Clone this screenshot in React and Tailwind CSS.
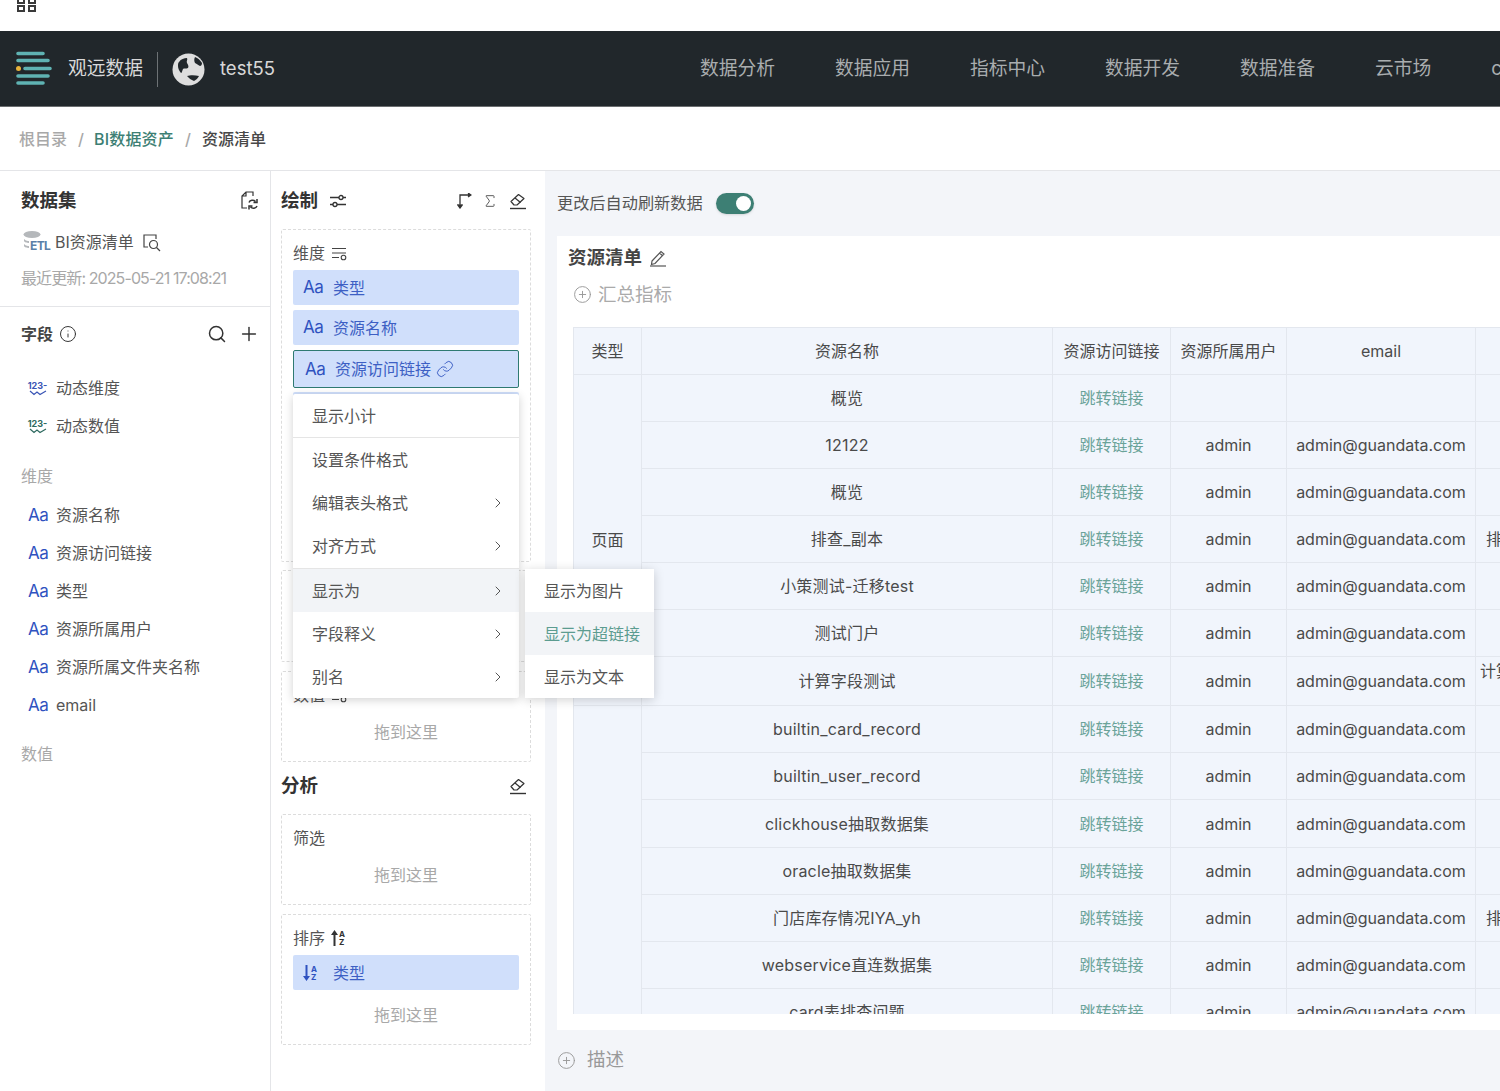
import { ChevronRight, CirclePlus, Info, Link, Plus, Search, Sigma } from "lucide-react";

const navItems = ["数据分析", "数据应用", "指标中心", "数据开发", "数据准备", "云市场", "c"];

const rows = [
  ["概览", "", "", ""],
  ["12122", "admin", "admin@guandata.com", ""],
  ["概览", "admin", "admin@guandata.com", ""],
  ["排查_副本", "admin", "admin@guandata.com", "排查_副本"],
  ["小策测试-迁移test", "admin", "admin@guandata.com", ""],
  ["测试门户", "admin", "admin@guandata.com", ""],
  ["计算字段测试", "admin", "admin@guandata.com", "计算字段测试"],
  ["builtin_card_record", "admin", "admin@guandata.com", ""],
  ["builtin_user_record", "admin", "admin@guandata.com", ""],
  ["clickhouse抽取数据集", "admin", "admin@guandata.com", ""],
  ["oracle抽取数据集", "admin", "admin@guandata.com", ""],
  ["门店库存情况IYA_yh", "admin", "admin@guandata.com", "排查问题"],
  ["webservice直连数据集", "admin", "admin@guandata.com", ""],
  ["card表排查问题", "admin", "admin@guandata.com", ""],
];

const Logo = () => (
  <svg width="36" height="36" viewBox="0 0 36 36" fill="none" strokeLinecap="round" strokeWidth="3.6" stroke="#5fb3b3" className="shrink-0">
    <path d="M2 2.5h25M2 9.5h30M9 17.500h25M2 25h30M2 32h25" />
    <circle cx="2.500" cy="17.500" r="2.500" fill="#e8b23a" stroke="none" />
  </svg>
);

const Globe = () => (
  <svg width="33" height="33" viewBox="0 0 33 33" className="shrink-0">
    <circle cx="16.500" cy="16.500" r="16" fill="#dedede" />
    <path d="M7 9c2-3 5-4 8-4 1 2-1 3 0 5 1 2 2 3 1 5-2 1-4 0-5 1-1 2-1 4-2 4-2-2-3-5-3-7 0-2 0-3 1-4z" fill="#21272b" />
    <path d="M23 4c3 1 5 3 7 6 0 2-1 3-2 3-2-1-3-2-5-3-1-2-1-4 0-6z" fill="#21272b" />
    <path d="M15 23c3-1 8-1 12 0-1 2-3 4-5 5-3-1-5-3-7-5z" fill="#21272b" />
  </svg>
);

const GridIcon = () => (
  <svg width="20" height="12" viewBox="0 0 20 12" fill="none" stroke="#3a3a3a" strokeWidth="2">
    <path d="M1 -5h6v8H1zM12 -5h6v8h-6zM1 6h6v5H1zM12 6h6v5h-6z" />
  </svg>
);

const Eraser = () => (
  <svg width="18" height="18" viewBox="0 0 18 18" fill="none" stroke="#333" strokeWidth="1.200" strokeLinejoin="round">
    <path d="M2 9.500 9.500 2.500l5.500 4-7 6.500H5z" />
    <path d="M6 6 11.500 10.500" />
    <path d="M1 16.500h16" strokeWidth="1.400" />
  </svg>
);

const FilterGear = () => (
  <svg width="16" height="14" viewBox="0 0 16 14" fill="none" stroke="#444" strokeWidth="1.100" className="mb-[4px] shrink-0">
    <path d="M1 1.500h14M1 6h14M1 10.500h7" />
    <circle cx="12.500" cy="10.500" r="2.300" />
  </svg>
);

const AaMark = ({ className = "" }) => (
  <span className={`shrink-0 text-[17px] leading-none tracking-[-0.5px] text-[#2f52c0] ${className}`}>Aa</span>
);

const Wave123 = ({ color }) => (
  <span className="flex w-[19px] flex-col items-center">
    <span className={`text-[9px] leading-[9px] font-bold ${color}`}>123-</span>
    <svg width="18" height="6" viewBox="0 0 18 6" fill="none" stroke="currentColor" className={color}>
      <path d="M1 1l4 3.500 3-2.500 3 2.500 6-3.500" strokeWidth="1.200" />
    </svg>
  </span>
);

const SortAz = ({ dir, color }) => (
  <span className={`flex items-center gap-[1px] ${color}`}>
    <svg width="7" height="16" viewBox="0 0 7 16" fill="currentColor">
      {dir === "up" ? <path d="M3.500 0 7 5H4.500v11h-2V5H0z" /> : <path d="M3.500 16 7 11H4.500V0h-2v11H0z" />}
    </svg>
    <span className="flex flex-col text-[8px] leading-[8px] font-bold">
      <span>A</span>
      <span>Z</span>
    </span>
  </span>
);

const FieldRow = ({ icon, label }) => (
  <div className="flex h-[38px] items-center pl-[28px] text-[16px] text-[#555]">
    <span className="flex w-[28px] shrink-0 items-center">{icon}</span>
    <span>{label}</span>
  </div>
);

const Pill = ({ label, icon, active }) => (
  <div
    className={`flex items-center rounded-[2px] bg-[#d0dffb] text-[16px] text-[#3d5fc4] ${
      active ? "h-[38px] border border-[#2f7a72] pl-[11px]" : "h-[35px] pl-[10px]"
    }`}
  >
    <span className="flex w-[30px] shrink-0 items-center">{icon || <AaMark className="text-[16px]" />}</span>
    <span>{label}</span>
    {active && <Link size={18} strokeWidth={1.300} className="ml-[5px] text-[#3d5fc4]" />}
  </div>
);

const MenuItem = ({ label, arrow, active }) => (
  <div className={`flex h-[43px] shrink-0 items-center justify-between pr-[13px] pl-[19px] ${active ? "bg-[#f2f4f7]" : ""}`}>
    <span>{label}</span>
    {arrow && <ChevronRight size={16} strokeWidth={1.500} className="text-[#555]" />}
  </div>
);

const Cell = ({ children, className = "" }) => (
  <div className={`flex items-center justify-center border-r border-b border-[#e3e7ee] text-[16px] whitespace-nowrap text-[#4a4a4a] ${className}`}>
    {children}
  </div>
);

const App = () => (
  <div className="relative flex h-[1091px] w-[1500px] flex-col overflow-hidden bg-white [font-family:Inter,'Noto_Sans_CJK_SC',sans-serif]">
    <div className="h-[31px] shrink-0 pl-[17px]">
      <GridIcon />
    </div>

    <header className="flex h-[76px] shrink-0 items-center overflow-hidden border-b border-[#6b6e70] bg-[#21272b] pt-[1px]">
      <div className="ml-[16px] shrink-0">
        <Logo />
      </div>
      <span className="ml-[16px] w-[75px] shrink-0 text-[18.750px] whitespace-nowrap text-[#d8d8d8]">观远数据</span>
      <span className="mr-[14px] ml-[14px] h-[35px] w-[1px] shrink-0 bg-[#6d7275]" />
      <Globe />
      <span className="ml-[15px] w-[56px] shrink-0 text-[18.500px] whitespace-nowrap text-[#d8d8d8]">test55</span>
      <nav className="ml-[424px] flex shrink-0 gap-[60px] text-[18.750px] text-[#a9adaf]">
        {navItems.map((item) => (
          <span key={item} className="shrink-0">
            {item}
          </span>
        ))}
      </nav>
    </header>

    <div className="flex h-[64px] shrink-0 items-center border-b border-[#e4e5e8] pl-[19px] text-[16px] font-medium">
      <span className="text-[#a8a8a8]">根目录</span>
      <span className="ml-[11px] mr-[10px] text-[#a8a8a8]">/</span>
      <span className="tracking-[0.2px] text-[#3d7f74]">BI数据资产</span>
      <span className="mx-[11px] text-[#a8a8a8]">/</span>
      <span className="text-[#484848]">资源清单</span>
    </div>

    <div className="flex min-h-0 flex-1">
      <aside className="w-[271px] shrink-0 border-r border-[#e4e5e8]">
        <div className="h-[136px] border-b border-[#e4e5e8] pr-[12px] pl-[21px]">
          <div className="flex h-[58px] items-center justify-between pt-[2px]">
            <h2 className="text-[18.500px] font-bold text-[#333]">数据集</h2>
            <svg width="18" height="20" viewBox="0 0 18 20" fill="none" stroke="#333" strokeWidth="1.200" className="shrink-0">
              <path d="M7 17H2V5l4-4h7v4M6 1v4H2" />
              <path d="M9 11.500c1-2.500 4.500-3 6.500-1M17 8v3.500h-3.500M17 15c-1 2.500-4.500 3-6.500 1M9 18.500V15h3.500" strokeWidth="1.500" />
            </svg>
          </div>
          <div className="flex h-[26px] items-center text-[16px] text-[#555]">
            <span className="relative h-[22px] w-[26px] shrink-0">
              <svg width="20" height="22" viewBox="0 0 20 22" className="ml-[2px]">
                <ellipse cx="9" cy="3.500" rx="8.500" ry="3.500" fill="#b5b8bb" />
                <path d="M1 8c2 2 4 2 5 2v2c-2 0-5-1-5-2zM1 13c2 2 4 2 5 2v2c-2 0-5-1-5-2z" fill="#b5b8bb" />
              </svg>
              <span className="absolute top-[8px] left-[9px] text-[12px] leading-[14px] font-bold tracking-[-0.6px] text-[#5a7fa8]">ETL</span>
            </span>
            <span className="ml-[8px]">BI资源清单</span>
            <svg width="18" height="18" viewBox="0 0 18 18" fill="none" stroke="#444" strokeWidth="1.200" className="mt-[2px] ml-[9px] shrink-0">
              <path d="M5 13H1V1h12v4" />
              <circle cx="10.500" cy="10.500" r="4" />
              <path d="M13.500 13.500 17 17" />
            </svg>
          </div>
          <div className="mt-[11px] text-[16px] tracking-[-0.9px] whitespace-nowrap text-[#a8a8a8]">最近更新: 2025-05-21 17:08:21</div>
        </div>

        <div className="mt-[14px] flex h-[26px] items-center pr-[10px] pl-[21px]">
          <h3 className="text-[16px] font-bold text-[#444]">字段</h3>
          <Info size={18} strokeWidth={1.300} className="ml-[6px] text-[#333]" />
          <Search size={20} strokeWidth={1.800} className="ml-auto text-[#333]" />
          <Plus size={22} strokeWidth={1.600} className="ml-[11px] text-[#333]" />
        </div>
        <div className="mt-[22px]">
          <FieldRow icon={<Wave123 color="text-[#3a55b5]" />} label="动态维度" />
          <FieldRow icon={<Wave123 color="text-[#2e6a60]" />} label="动态数值" />
        </div>
        <div className="mt-[19px] h-[24px] pl-[21px] text-[16px] leading-[24px] text-[#a8a8a8]">维度</div>
        <div className="mt-[8px]">
          {["资源名称", "资源访问链接", "类型", "资源所属用户", "资源所属文件夹名称", "email"].map((label) => (
            <FieldRow key={label} icon={<AaMark />} label={label} />
          ))}
        </div>
        <div className="mt-[18px] h-[24px] pl-[21px] text-[16px] leading-[24px] text-[#a8a8a8]">数值</div>
      </aside>

      <section className="w-[274px] shrink-0 pr-[14px] pl-[10px]">
        <div className="flex h-[58px] items-center pt-[2px] pr-[4px]">
          <h2 className="text-[18.500px] font-bold text-[#333]">绘制</h2>
          <svg width="18" height="16" viewBox="0 0 18 16" fill="none" stroke="#333" strokeWidth="1.300" className="ml-[11px] shrink-0">
            <path d="M1 4.500h9M14 4.500h3M1 11.500h3M8 11.500h9" />
            <circle cx="12" cy="4.500" r="2" />
            <circle cx="6" cy="11.500" r="2" />
          </svg>
          <svg width="15" height="16" viewBox="0 0 15 16" fill="none" stroke="#333" strokeWidth="1.300" className="ml-auto shrink-0">
            <path d="M3 15V2h10" />
            <path d="M0.500 11.500 3 15l2.500-3.500M11 0l3 2-3 2" fill="#333" />
          </svg>
          <Sigma size={16} strokeWidth={1.200} className="ml-[10px] text-[#333]" />
          <span className="ml-[11px]">
            <Eraser />
          </span>
        </div>

        <div className="h-[333px] rounded-[2px] border border-dashed border-[#dcdcdc] px-[11px]">
          <div className="flex h-[40px] items-end gap-[6px] pb-[5px] text-[16px] leading-[24px] text-[#555]">
            维度
            <FilterGear />
          </div>
          <div className="flex flex-col gap-[5px]">
            <Pill label="类型" />
            <Pill label="资源名称" />
            <Pill label="资源访问链接" active />
            <div className="-mt-[1px] h-[35px] rounded-[2px] bg-[#d0dffb]" />
          </div>
        </div>

        <div className="mt-[8px] h-[92px] rounded-[2px] border border-dashed border-[#dcdcdc]" />

        <div className="mt-[9px] h-[91px] rounded-[2px] border border-dashed border-[#dcdcdc] px-[11px]">
          <div className="flex h-[35px] items-end gap-[6px] text-[16px] leading-[24px] text-[#555]">
            数值
            <FilterGear />
          </div>
          <div className="mt-[13px] text-center text-[16px] text-[#a8a8a8]">拖到这里</div>
        </div>

        <div className="mt-[3px] flex h-[42px] items-center pr-[4px]">
          <h2 className="text-[18.500px] font-bold text-[#333]">分析</h2>
          <span className="ml-auto">
            <Eraser />
          </span>
        </div>

        <div className="mt-[7px] h-[91px] rounded-[2px] border border-dashed border-[#dcdcdc] px-[11px]">
          <div className="mt-[11px] text-[16px] leading-[24px] text-[#555]">筛选</div>
          <div className="mt-[13px] text-center text-[16px] leading-[24px] text-[#a8a8a8]">拖到这里</div>
        </div>

        <div className="mt-[9px] h-[131px] rounded-[2px] border border-dashed border-[#dcdcdc] px-[11px]">
          <div className="mt-[11px] flex items-center gap-[6px] text-[16px] leading-[24px] text-[#555]">
            排序
            <SortAz dir="up" color="text-[#333]" />
          </div>
          <div className="mt-[5px]">
            <Pill label="类型" icon={<SortAz dir="down" color="text-[#2f52c0]" />} />
          </div>
          <div className="mt-[13px] text-center text-[16px] leading-[24px] text-[#a8a8a8]">拖到这里</div>
        </div>
      </section>

      <main className="min-w-0 flex-1 overflow-hidden bg-[#f3f5f9] pl-[12px]">
        <div className="flex h-[65px] items-center text-[16.200px] text-[#555]">
          <span>更改后自动刷新数据</span>
          <span className="ml-[13px] flex h-[21px] w-[38px] items-center justify-end rounded-full bg-[#3d7f74] pr-[3px] shadow-sm">
            <span className="h-[15px] w-[15px] rounded-full bg-white" />
          </span>
        </div>

        <div className="h-[794px] w-[960px] bg-white">
          <div className="flex h-[41px] items-end pb-[7px] pl-[11px]">
            <h2 className="text-[18.500px] leading-[26px] font-bold text-[#444]">资源清单</h2>
            <svg width="18" height="18" viewBox="0 0 18 18" fill="none" stroke="#555" strokeWidth="1.200" className="mb-[3px] ml-[7px] shrink-0">
              <path d="M3 12 12 2.500l3 2.500-9 9.500-3.500 1zM10.500 4l3 2.700" />
              <path d="M1 17h16" />
            </svg>
          </div>
          <div className="flex h-[35px] items-center gap-[6px] pl-[16px] text-[18.500px] text-[#aaa]">
            <CirclePlus size={19} strokeWidth={1.200} className="text-[#999]" />
            汇总指标
          </div>

          <div className="mt-[15px] ml-[16px] h-[687px] overflow-hidden border-t border-l border-[#e3e7ee] bg-[#f1f5fc]">
            <div className="grid grid-cols-[68px_411px_118px_116px_189px_230px] grid-rows-[47px_47px_47px_47px_47px_47px_47px_49px_47px_47px_48px_47px_47px_47px_47px]">
              <Cell>类型</Cell>
              <Cell>资源名称</Cell>
              <Cell>资源访问链接</Cell>
              <Cell>资源所属用户</Cell>
              <Cell>email</Cell>
              <Cell />

              <Cell className="col-start-1 row-span-7 row-start-2">页面</Cell>
              <Cell className="col-start-1 row-span-7 row-start-9 border-b-0" />

              {rows.map(([name, user, mail, extra]) => (
                <div key={name + mail + user + extra} className="contents">
                  <Cell className="col-start-2 tracking-[0.2px]">{name}</Cell>
                  <Cell className="text-[#6aa399]">跳转链接</Cell>
                  <Cell>{user}</Cell>
                  <Cell>{mail}</Cell>
                  <Cell className={`justify-start ${extra === "计算字段测试" ? "items-start pt-[2px] pl-[4px]" : "pl-[10px]"}`}>{extra}</Cell>
                </div>
              ))}
            </div>
          </div>
        </div>

        <div className="flex h-[60px] items-center text-[18.500px] text-[#999]">
          <CirclePlus size={19} strokeWidth={1.200} className="mr-[11px] text-[#999]" />
          描述
        </div>
      </main>
    </div>

    <div className="absolute top-[394px] left-[293px] flex h-[304px] w-[226px] flex-col rounded-[2px] bg-white text-[16px] text-[#555] shadow-[0_2px_10px_rgba(0,0,0,0.18)]">
      <div className="border-b border-[#e5e5e5]">
        <MenuItem label="显示小计" />
      </div>
      <MenuItem label="设置条件格式" />
      <MenuItem label="编辑表头格式" arrow />
      <MenuItem label="对齐方式" arrow />
      <div className="mt-[1px] border-t border-[#e5e5e5]">
        <MenuItem label="显示为" arrow active />
      </div>
      <MenuItem label="字段释义" arrow />
      <MenuItem label="别名" arrow />
    </div>

    <div className="absolute top-[569px] left-[525px] flex h-[129px] w-[129px] flex-col bg-white text-[16px] text-[#555] shadow-[0_2px_10px_rgba(0,0,0,0.18)]">
      <MenuItem label="显示为图片" />
      <div className="flex h-[43px] items-center bg-[#f2f4f7] pl-[19px] text-[#5c9c90]">显示为超链接</div>
      <MenuItem label="显示为文本" />
    </div>
  </div>
);

export default App;
